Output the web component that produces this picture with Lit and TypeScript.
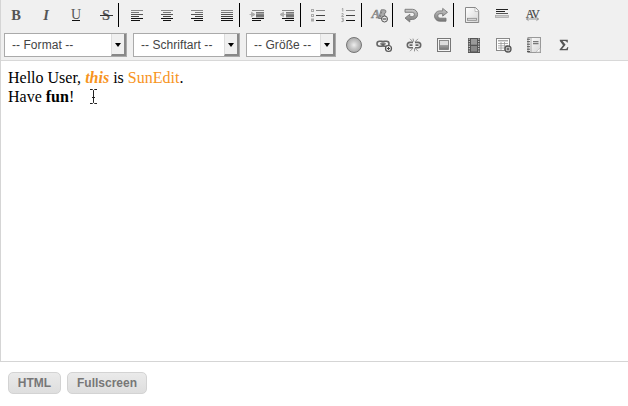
import { LitElement, html, css, svg, nothing } from "lit";
import { customElement, property } from "lit/decorators.js";

const shade = (y: number) => (y < 6 ? "#888" : y < 8 ? "#777" : y < 10 ? "#555" : y < 12 ? "#444" : "#111");
const rows = (list: number[][]) =>
  list.map(([x, y, w, h = 1]) => svg`<rect x=${x} y=${y} width=${w} height=${h} fill=${shade(y)} />`);

const chain = svg`<g fill="none" stroke="#666" stroke-width="1.6"><rect x="3" y="6.3" width="7" height="5" rx="2.5"/><rect x="8" y="6.3" width="7" height="5" rx="2.5"/></g><path d="M6 8.8h6" stroke="#555"/><path d="M6 7.9h6" stroke="#ddd" stroke-width=".7"/>`;
const plus = svg`<circle cx="14.5" cy="13.5" r="3" fill="#eee" stroke="#555" stroke-width="1.2"/><path d="M12.9 13.5h3.2M14.5 11.9v3.2" stroke="#444"/>`;

const icons: Record<string, unknown> = {
  bold: svg`<text class="g b" x="10" y="15">B</text>`,
  italic: svg`<text class="g b i" x="10" y="15">I</text>`,
  underline: svg`<text class="g u" x="10" y="13.6">U</text><path d="M6 15.5h8" stroke="#111"/>`,
  strike: svg`<text class="g b" x="10" y="15">S</text><path d="M4 10.5h13" stroke="#333"/>`,
  left: rows([[4, 5, 12], [4, 7, 8], [4, 9, 12], [4, 11, 8], [4, 13, 12], [4, 15, 9]]),
  center: rows([[4, 5, 12], [6, 7, 8], [4, 9, 12], [6, 11, 8], [4, 13, 12], [6, 15, 8]]),
  right: rows([[4, 5, 12], [8, 7, 8], [4, 9, 12], [8, 11, 8], [4, 13, 12], [7, 15, 9]]),
  justify: rows([[4, 5, 12], [4, 7, 12], [4, 9, 12], [4, 11, 12], [4, 13, 12], [4, 15, 12]]),
  indent: svg`${rows([[4, 5, 12], [8, 7, 8, 1.6], [8, 9.3, 8, 1.5], [8, 11.3, 8], [4, 13, 12], [4, 15, 9]])}<path d="M1.5 9.5h3M3.5 7.3v4.4l3.5-2.2z" fill="#aaa" stroke="#aaa" stroke-width=".9"/>`,
  outdent: svg`${rows([[4, 5, 12], [8, 7, 8, 1.6], [8, 9.3, 8, 1.5], [8, 11.3, 8], [4, 13, 12], [7, 15, 9]])}<path d="M7.5 9.5H5M5.5 7.3v4.4L2 9.5z" fill="#aaa" stroke="#aaa" stroke-width=".9"/>`,
  bullets: svg`<g fill="#eee" stroke="#aaa"><rect x="2.5" y="4.5" width="2" height="2"/><rect x="2.5" y="9.5" width="2" height="2"/><rect x="2.5" y="14" width="2" height="2"/></g>${rows([[7, 5, 9], [7, 10, 9], [7, 15, 9]])}`,
  numbers: svg`<path d="M2.8 4l1-.6v3.2M2.5 8.8q2-.8 2 .3l-2 2.3h2.5M2.6 13.4q2-.5 2 .6 0 .9-1.3.9 1.4 0 1.4 1t-2.3.7" fill="none" stroke="#999" stroke-width=".9"/>${rows([[7, 5, 9], [7, 10, 9], [7, 15, 9]])}`,
  clear: svg`<text class="a" x="1.5" y="12.5">A</text><path d="M11.2 4.8h3q2.2.2 1.7 2.2-.4 1.7-2 1.9 1.5.4 1 2.4-.5 2.2-2.8 2.2H8.6zM11.8 6.6l-.5 1.9M10.9 10l-.5 2" fill="#aaa" stroke="#777" stroke-width=".9"/><circle cx="14.5" cy="14" r="3" fill="#e8e8e8" stroke="#555"/><path d="M12.7 14h3.6" stroke="#333"/>`,
  undo: svg`<path d="M4 4.3h7.5a5.1 5.1 0 0 1 0 10.2H8.8V17L4 13.1l4.8-3.8v2.4h2.4a2.2 2.2 0 0 0 0-4.4H4z" fill="url(#metal)" stroke="#777" stroke-width=".9"/>`,
  redo: svg`<path d="M15 16.2H8.7a5.1 5.1 0 0 1 0-10.3H11.7V3.4l4.8 3.9-4.8 3.8V8.7H9a2.2 2.2 0 0 0 0 4.5h6z" fill="url(#metal)" stroke="#777" stroke-width=".9"/>`,
  page: svg`<path d="M3.5 2.5h10l3.2 3.5v11.5H3.5z" fill="url(#paper)" stroke="#888"/><path d="M13 3v3.5h3.5" fill="#fff" stroke="#aaa" stroke-width=".7"/><rect x="5.5" y="13.3" width="9" height="2" fill="#ddd" stroke="#888" stroke-width=".8"/>`,
  rule: svg`<path d="M4 4.5h12M4 6.5h9" stroke="#222"/><path d="M4 8.5h12" stroke="#555"/><rect x="3.5" y="10.5" width="13" height="2" fill="#ccc" stroke="#aaa" stroke-width=".8"/>`,
  spacing: svg`<text class="av" x="10.3" y="12.5">AV</text><path d="M4.5 14h12M6.5 12.4l-2 1.6 2 1.6M14.5 12.4l2 1.6-2 1.6" fill="none" stroke="#888" stroke-width=".9"/>`,
  sphere: svg`<circle cx="10" cy="10" r="7.5" fill="url(#ball)" stroke="#777"/>`,
  link: svg`${chain}${plus}`,
  unlink: svg`<path d="M9 7.4H6a2.7 2.7 0 0 0 0 5.4H9M11 7.4h3a2.7 2.7 0 0 1 0 5.4H11M5.5 10.1h3M11.5 10.1h3" fill="none" stroke="#666" stroke-width="1.6"/><path d="M6 3.8l3 3M9 3.6l.7 3M14 3.8l-3 3M6 16.2l3-3M14 16.2l-3-3M10.5 16.4v-3" stroke="#888" stroke-width=".9"/>`,
  image: svg`<rect x="3.5" y="3.5" width="13" height="13" fill="#f4f4f4" stroke="#777"/><rect x="5.5" y="5.5" width="9" height="9" fill="url(#metal)" stroke="#777" stroke-width=".8"/><path d="M6 10h8v-4H6z" fill="#ddd"/>`,
  film: svg`<rect x="4" y="3" width="12" height="15" fill="#555"/><rect x="7" y="4" width="6" height="5.7" fill="#999"/><rect x="7" y="11" width="6" height="5.5" fill="#888"/><path d="M5.3 3.5v14M14.7 3.5v14" stroke="#ccc" stroke-width="1.2" stroke-dasharray="1.2 1.2"/>`,
  table: svg`<rect x="2.5" y="3.5" width="13" height="12" fill="#fff" stroke="#888"/><path d="M4 5.7h10" stroke="#aaa" stroke-width="1.5"/><path d="M4 8.5h10M4 10.8h10M4 13h10M7 7v8M10.5 7v8" stroke="#999" stroke-width=".8"/><circle cx="14" cy="14" r="3" fill="#ddd" stroke="#555" stroke-width="1.3"/><path d="M12.5 14h3M14 12.5v3" stroke="#444"/>`,
  notebook: svg`<rect x="4" y="2.5" width="12.5" height="15" fill="url(#paper)" stroke="#999"/><path d="M7 3v14" stroke="#999" stroke-width=".8"/><path d="M3 4.2h3M3 6.7h3M3 9.2h3M3 11.7h3M3 14.2h3M3 16.5h3" stroke="#555"/><path d="M9 6.7h5.5M9 8.7h5.5" stroke="#777" stroke-width="1.2"/><path d="M12 17l4-4v4z" fill="#fff" stroke="#bbb" stroke-width=".7"/>`,
  sigma: svg`<path d="M5.8 4.7h8v2.8h-.8q-.3-1.5-2-1.5H8.6l3 3.8-3.5 4.2h3.2q1.8 0 2.2-1.9h.8l-.5 3.2H5.6v-.9L9 10.3 5.8 6z" fill="#555"/>`,
};

@customElement("tool-icon")
class ToolIcon extends LitElement {
  @property() name = "";
  @property({ type: Boolean, reflect: true }) last = false;
  static styles = css`
    :host { display: flex; align-items: center; flex: none; width: 30px; height: 30px; }
    :host([last]) { width: 31px; }
    svg { width: 20px; height: 20px; margin-left: 5px; overflow: visible; flex: none; }
    .bar { width: 1px; height: 24px; background: #000; margin-left: 2px; }
    text { fill: #555; }
    .g { font: 14.5px "Liberation Serif", serif; text-anchor: middle; }
    .b { font-weight: bold; }
    .i { font-style: italic; }
    .u { font-size: 14px; }
    .a { font: italic bold 13px "Liberation Serif", serif; fill: #999; stroke: #777; stroke-width: 0.4px; }
    .av { font: 11.5px "Liberation Serif", serif; text-anchor: middle; letter-spacing: -1px; fill: #444; stroke: #444; stroke-width: 0.2px; }
  `;
  render() {
    return html`<svg viewBox="0 0 20 20">
      <defs>
        <linearGradient id="metal" x2="0" y2="1"><stop stop-color="#ccc"/><stop offset="1" stop-color="#777"/></linearGradient>
        <linearGradient id="paper" x2="1" y2="1"><stop stop-color="#fff"/><stop offset="1" stop-color="#d5d5d5"/></linearGradient>
        <radialGradient id="ball"><stop stop-color="#eee"/><stop offset=".45" stop-color="#ccc"/><stop offset="1" stop-color="#aaa"/></radialGradient>
      </defs>${icons[this.name]}</svg>${this.last ? html`<span class="bar"></span>` : nothing}`;
  }
}

@customElement("tool-select")
class ToolSelect extends LitElement {
  @property() label = "";
  static styles = css`
    :host { display: flex; box-sizing: border-box; height: 24px; flex: none; background: #fff; border: 1px solid #aaa; font: 12px "Liberation Sans", Arial, sans-serif; letter-spacing: 0.05px; color: #444; }
    .label { flex: 1; padding-left: 7px; line-height: 22px; white-space: nowrap; }
    .arrow { box-sizing: border-box; width: 15px; background: #f0f0f0; border-right: 2px solid #888; border-bottom: 2px solid #888; border-left: 1px solid #ddd; display: flex; align-items: center; justify-content: center; }
    .arrow::before { content: ""; border: 3.5px solid transparent; border-top: 4px solid #000; border-bottom: 0; margin-top: 1px; }
  `;
  render() {
    return html`<span class="label">${this.label}</span><span class="arrow"></span>`;
  }
}

const groups = [
  ["bold", "italic", "underline", "strike"],
  ["left", "center", "right", "justify"],
  ["indent", "outdent"],
  ["bullets", "numbers"],
  ["clear"],
  ["undo", "redo"],
  ["page", "rule", "spacing"],
];

@customElement("app-root")
class AppRoot extends LitElement {
  static styles = css`
    :host { display: flex; flex-direction: column; height: 406px; overflow: hidden; background: #fff; }
    .editor { box-sizing: border-box; height: 362px; border-left: 1px solid #d5d5d5; border-bottom: 1px solid #d5d5d5; }
    .tools { box-sizing: border-box; height: 61px; background: #f0f0f0; border-bottom: 1px solid #d8d8d8; }
    .line { display: flex; height: 30px; align-items: center; }
    .line.second { padding-left: 3px; }
    .format { width: 123px; margin-right: 6px; }
    .family { width: 107px; margin-right: 6px; }
    .size { width: 90px; margin-right: 3px; }
    .content { position: relative; padding: 7px; font: 16px/19px "Liberation Serif", "Times New Roman", serif; color: #000; }
    .orange { color: #f7941d; }
    .caret { position: absolute; left: 88px; top: 27px; width: 9px; height: 17px; }
    .actions { display: flex; gap: 6px; padding: 10px 8px; }
    .button { box-sizing: border-box; height: 22px; width: 53px; border: 1px solid #d3d3d3; border-radius: 5px; background: linear-gradient(#eaeaea, #dedede); color: #777; font: bold 12px/20px "Liberation Sans", Arial, sans-serif; text-align: center; }
    .wide { width: 80px; }
  `;
  render() {
    return html`
      <div class="editor">
        <div class="tools">
          <div class="line">
            ${groups.map((g, gi) => g.map((n, i) => html`<tool-icon name=${n} ?last=${gi < groups.length - 1 && i === g.length - 1}></tool-icon>`))}
          </div>
          <div class="line second">
            <tool-select class="format" label="-- Format --"></tool-select>
            <tool-select class="family" label="-- Schriftart --"></tool-select>
            <tool-select class="size" label="-- Größe --"></tool-select>
            ${["sphere", "link", "unlink", "image", "film", "table", "notebook", "sigma"].map(n => html`<tool-icon name=${n}></tool-icon>`)}
          </div>
        </div>
        <div class="content">
          <div>Hello User, <b class="orange"><i>this</i></b> is <span class="orange">SunEdit</span>.</div>
          <div>Have <b>fun</b>!</div>
          <svg class="caret" viewBox="0 0 9 17"><path d="M1 1.5h2.5l1 1 1-1H8M4.5 2.5v12M1 15.5h2.5l1-1 1 1H8M3 9.5h3" fill="none" stroke="#222"/></svg>
        </div>
      </div>
      <div class="actions"><div class="button">HTML</div><div class="button wide">Fullscreen</div></div>
    `;
  }
}
